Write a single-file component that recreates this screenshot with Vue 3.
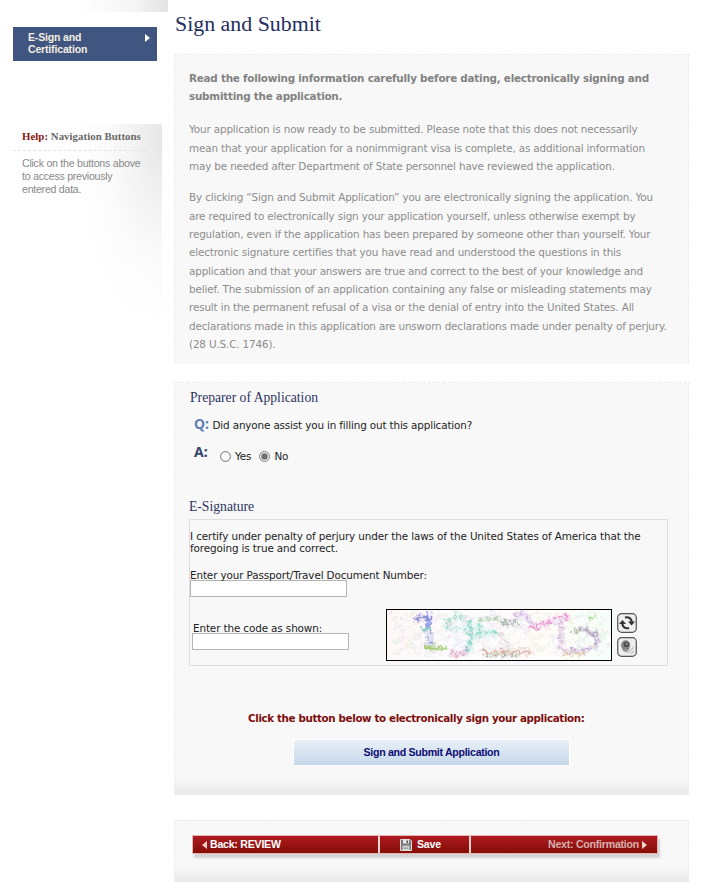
<template>
  <div class="page">
    <aside class="sidebar">
      <div class="side-cap"></div>
      <a class="side-link">
        <span>E-Sign and<br>Certification</span>
        <svg width="5" height="8" viewBox="0 0 5 8"><path d="M0 0L5 4L0 8Z" fill="#fff" /></svg>
      </a>
      <div class="help">
        <h4><b>Help:</b> Navigation Buttons</h4>
        <p>Click on the buttons above<br>to access previously<br>entered data.</p>
      </div>
    </aside>

    <main class="content">
      <h1>Sign and Submit</h1>

      <section class="panel intro">
        <p v-for="(para, i) in paragraphs" :key="i" :class="{ strong: i === 0 }">
          <span v-for="line in para" :key="line" class="line">{{ line }}</span>
        </p>
      </section>

      <section class="panel form">
        <h2>Preparer of Application</h2>
        <div class="question"><b class="q">Q:</b><span>Did anyone assist you in filling out this application?</span></div>
        <div class="answer">
          <b class="a">A:</b>
          <label v-for="opt in ['Yes', 'No']" :key="opt">
            <svg width="11" height="11" viewBox="0 0 11 11">
              <circle cx="5.5" cy="5.5" r="4.9" fill="#fff" stroke="#6e6e6e" />
              <circle v-if="assisted === opt" cx="5.5" cy="5.5" r="3.2" fill="#707070" />
            </svg>
            <input v-model="assisted" type="radio" :value="opt">
            <span>{{ opt }}</span>
          </label>
        </div>

        <h2 class="esign">E-Signature</h2>
        <div class="signature">
          <p>I certify under penalty of perjury under the laws of the United States of America that the<br>foregoing is true and correct.</p>
          <label class="field">Enter your Passport/Travel Document Number:<input type="text"></label>
          <div class="code-row">
            <label class="field code">Enter the code as shown:<input type="text"></label>
            <svg class="captcha" width="226" height="52" viewBox="0 0 226 52">
              <defs>
                <filter id="rough" x="-5%" y="-10%" width="110%" height="120%">
                  <feTurbulence type="fractalNoise" baseFrequency=".22" numOctaves="2" seed="4" />
                  <feDisplacementMap in="SourceGraphic" scale="11" xChannelSelector="R" yChannelSelector="G" />
                  <feGaussianBlur stdDeviation=".4" />
                </filter>
                <linearGradient id="wash">
                  <stop offset="0" stop-color="#fff8f6" /><stop offset=".3" stop-color="#fcfbff" />
                  <stop offset=".7" stop-color="#fffcf8" /><stop offset="1" stop-color="#f6fffa" />
                </linearGradient>
              </defs>
              <rect width="226" height="52" fill="url(#wash)" />
              <g filter="url(#rough)" fill="none">
                <path v-for="(s, i) in specks" :key="'s' + i" :d="s.d" :stroke="s.color" stroke-width="2.5" opacity=".22" />
                <path v-for="(m, i) in marks" :key="'h' + i" :d="m[0]" :stroke="m[1]" :stroke-width="m[2] + 5" opacity=".22" />
                <path v-for="(m, i) in marks" :key="'m' + i" :d="m[0]" :stroke="m[1]" :stroke-width="m[2] + 1" :stroke-dasharray="m[3]" opacity=".7" />
              </g>
              <rect x=".5" y=".5" width="225" height="51" fill="none" stroke="#000" />
            </svg>
            <div class="tools">
              <button type="button" aria-label="Refresh">
                <svg width="20" height="20" viewBox="0 0 20 20">
                  <rect x=".7" y=".7" width="18.6" height="18.6" rx="4" fill="#eee" stroke="#555" stroke-width="1.2" />
                  <path d="M8 4.5C12 3.5 14.5 5.5 14.7 9" fill="none" stroke="#333" stroke-width="2.2" />
                  <path d="M12 15C8 16 5.5 14 5.3 10.5" fill="none" stroke="#333" stroke-width="2.2" />
                  <path d="M11 8.5H18L14.6 12.5Z M2 11H9L5.4 7Z" fill="#333" />
                </svg>
              </button>
              <button type="button" aria-label="Listen">
                <svg width="20" height="20" viewBox="0 0 20 20">
                  <rect x=".7" y=".7" width="18.6" height="18.6" rx="4" fill="#eee" stroke="#555" stroke-width="1.2" />
                  <path d="M4 9L6 14L10 15.5L13 11Z" fill="#999" />
                  <circle cx="8.7" cy="7.9" r="4.6" fill="#858585" />
                  <circle cx="9.3" cy="7.4" r="2.6" fill="#484848" />
                  <circle cx="9.6" cy="7" r="1.1" fill="#aaa" />
                  <path d="M11 16L17 10M14 17L17 14" stroke="#c4c4c4" stroke-width="1.4" />
                </svg>
              </button>
            </div>
          </div>
        </div>

        <p class="prompt">Click the button below to electronically sign your application:</p>
        <button type="button" class="submit">Sign and Submit Application</button>
      </section>

      <section class="panel footer">
        <nav class="bar">
          <button type="button" class="back">
            <svg width="5" height="8" viewBox="0 0 5 8"><path d="M5 0L0 4L5 8Z" fill="#f3cfc4" /></svg>
            <span>Back: REVIEW</span>
          </button>
          <button type="button" class="save">
            <svg width="12" height="12" viewBox="0 0 12 12">
              <path d="M.5 .5H10L11.5 2V11.5H.5Z" fill="#777" stroke="#ddd" />
              <path d="M3 1H9V4.5H3Z" fill="#e8e8e8" /><path d="M6.5 1.5H8V4H6.5Z" fill="#555" />
              <path d="M2.5 6.5H9.5V11H2.5Z" fill="#ddd" /><path d="M3.5 8H8.5M3.5 9.5H8.5" stroke="#888" stroke-width=".7" />
            </svg>
            <span>Save</span>
          </button>
          <button type="button" class="next">
            <span>Next: Confirmation</span>
            <svg width="5" height="8" viewBox="0 0 5 8"><path d="M0 0L5 4L0 8Z" fill="#f3d8d0" /></svg>
          </button>
        </nav>
      </section>
    </main>
  </div>
</template>

<script setup>
import { ref } from 'vue'

const assisted = ref('No')

const paragraphs = [
  [
    'Read the following information carefully before dating, electronically signing and',
    'submitting the application.',
  ],
  [
    'Your application is now ready to be submitted. Please note that this does not necessarily',
    'mean that your application for a nonimmigrant visa is complete, as additional information',
    'may be needed after Department of State personnel have reviewed the application.',
  ],
  [
    'By clicking “Sign and Submit Application” you are electronically signing the application. You',
    'are required to electronically sign your application yourself, unless otherwise exempt by',
    'regulation, even if the application has been prepared by someone other than yourself. Your',
    'electronic signature certifies that you have read and understood the questions in this',
    'application and that your answers are true and correct to the best of your knowledge and',
    'belief. The submission of an application containing any false or misleading statements may',
    'result in the permanent refusal of a visa or the denial of entry into the United States. All',
    'declarations made in this application are unsworn declarations made under penalty of perjury.',
    '(28 U.S.C. 1746).',
  ],
]

// path, colour, width, dash pattern
const marks = [
  ['M27 11L38 8L46 11', '#7079c8', 2, '9 2'],
  ['M42 4L43 13L40 21', '#7b88f0', 2, '7 2'],
  ['M35 20L46 20', '#77c8b0', 2, '5 2'],
  ['M43 20L43 37', '#8f9ad5', 1, '4 3'],
  ['M40 39L62 39', '#8abd4f', 2, '8 1'],
  ['M60 18C61 9 72 5 80 11', '#90d2b7', 1, '3 3'],
  ['M82 11C86 19 86 35 81 43', '#78cec2', 3, '5 2'],
  ['M60 19L80 20', '#96d9d0', 1, '4 4'],
  ['M63 42C69 47 77 47 83 40', '#d69bb9', 1, '3 3'],
  ['M92 11L110 9L122 14', '#a9c4a1', 1, '5 3'],
  ['M93 14L93 25L112 23', '#74d4c2', 2, '5 3'],
  ['M113 26L122 36L117 42', '#d3b9d8', 1, '3 4'],
  ['M97 43L146 43', '#d2a18d', 1, '8 2'],
  ['M101 46L132 45', '#9fad91', 1, '3 5'],
  ['M116 14L134 15', '#a8abb6', 2, '5 3'],
  ['M129 7L139 5L146 15', '#c6a0df', 1, '4 2'],
  ['M144 18L158 15L171 8L184 8', '#e37fce', 2, '4 2'],
  ['M175 12L175 43', '#cda9dc', 2, '4 2'],
  ['M186 22L198 20L211 27', '#8cad83', 1, '5 2'],
  ['M193 19L210 26L213 35', '#be9ed2', 2, '5 2'],
  ['M174 42L206 40L212 32', '#b99fd0', 1, '7 2'],
  ['M179 45L199 44', '#dbb397', 1, '4 4'],
  ['M203 9L210 6', '#87dc76', 2, '4 2'],
]

// Pale speckle spread over the whole image
const tints = ['#e9a9c8', '#a9d8c9', '#c9b6ea', '#f0cfa8', '#b7dba7']
const specks = Array.from({ length: 180 }, (_, i) => {
  const x = 3 + (i * 37) % 216
  const y = 4 + (i * 23) % 43
  return { d: `M${x} ${y}l${3 + i % 6} ${i % 3 - 1}`, color: tints[i % 5] }
})
</script>

<style>
body { margin: 0; background: #fff; }
</style>

<style scoped>
* { box-sizing: border-box; }
h1, h2, h4, p { margin: 0; font-weight: normal; }
button { padding: 0; border: 0; background: none; font: inherit; letter-spacing: inherit; }
svg { display: block; flex: none; }

.page {
  display: flex;
  width: 711px;
  height: 890px;
  overflow: hidden;
  font: 10.4px/12px "DejaVu Sans", sans-serif;
  letter-spacing: -.12px;
  color: #222;
}

/* Sidebar */
.sidebar { width: 174px; font-family: "Liberation Sans", sans-serif; }
.side-cap { width: 168px; height: 12px; background: linear-gradient(90deg, #fff 45%, #f5f5f5 80%, #e2e2e2); }
.side-link {
  display: flex;
  justify-content: space-between;
  width: 144px;
  height: 34px;
  margin: 15px 0 0 13px;
  padding: 5px 7px 0 15px;
  background: #40557f;
  color: #f2efe2;
  font-size: 10.5px;
  font-weight: bold;
  line-height: 11.6px;
  letter-spacing: -.16px;
}
.side-link svg { margin-top: 2px; }
.help {
  width: 149px;
  height: 205px;
  margin: 63px 0 0 13px;
  padding: 6px 0 0 9px;
  background: radial-gradient(ellipse 85px 190px at 100% 8%, #e6e6e6, #f3f3f3 35%, #fbfbfb 65%, #fff);
}
.help h4 {
  width: 134px;
  height: 21px;
  margin-left: -9px;
  padding-left: 9px;
  border-bottom: 1px dashed #e4e4e4;
  color: #686868;
  font: bold 10.8px/12px "Liberation Serif", serif;
  letter-spacing: .05px;
  white-space: nowrap;
}
.help h4 b { color: #8a1511; }
.help p { padding-top: 6px; color: #888; font-size: 10.6px; line-height: 13px; letter-spacing: -.25px; white-space: nowrap; }

/* Panels */
.content { width: 515px; }
h1 { height: 54px; padding: 11px 0 0 1px; color: #252e60; font: 21.9px/26px "Liberation Serif", serif; letter-spacing: 0; }
.panel { background: #f8f8f8; border: 1px dashed #eeeee5; border-bottom: 0; }
.intro { height: 310px; padding: 14px 14px; color: #8c8c8c; line-height: 18.3px; letter-spacing: -.15px; }
.intro p { margin-bottom: 13.3px; }
.intro .line { display: block; white-space: nowrap; }
.intro .strong { margin-bottom: 14.7px; color: #828282; font-weight: bold; letter-spacing: -.235px; }

.form {
  height: 413px;
  margin-top: 18px;
  padding: 6px 20px 0 14px;
  border-top-color: #f8f8f8;
  background: linear-gradient(#f8f8f8 96%, #e9e9e8);
}
h2 { padding-left: 1px; color: #2c3560; font: 13.65px/17px "Liberation Serif", serif; letter-spacing: 0; }
.question { display: flex; margin: 10px 0 0 5px; line-height: 19px; letter-spacing: -.15px; }
.q, .a { font: bold 14px/15px "Noto Sans", sans-serif; letter-spacing: 0; }
.q { width: 18.5px; color: #5f7fb5; }
.a { width: 26px; color: #35456c; }
.answer { display: flex; margin: 9px 0 0 5px; }
.answer label { display: flex; align-items: center; height: 12px; margin: 6px 8px 0 0; }
.answer label span { margin-left: 4px; }
.answer input { display: none; }

.esign { margin: 36px 0 4px -1px; }
.signature { width: 479px; height: 147px; padding-top: 10px; border: 1px solid #dedede; }
.signature p { white-space: nowrap; }
.field { display: block; margin-top: 15px; }
.field input {
  display: block;
  width: 157px;
  height: 17px;
  margin: -1px 0 0;
  border: 1px solid #b5b5b5;
  background: #fff;
}
.code-row { display: flex; margin-top: 12px; }
.field.code { width: 193px; margin: 13px 0 0 3px; }
.field.code input { margin-left: -1px; }
.tools { display: flex; flex-direction: column; gap: 4px; margin: 4px 0 0 5px; }
.tools button { height: 20px; }

.prompt { margin-top: 46px; padding-left: 59px; color: #7d0c0c; font-size: 10.3px; font-weight: bold; letter-spacing: -.35px; white-space: nowrap; }
.submit {
  width: 277px;
  height: 27px;
  margin: 15px 0 0 104px;
  border: 1px solid #fff;
  background: linear-gradient(#e8f0f7, #c5d8e9);
  color: #0c0c73;
  font: bold 10.6px/25px "Liberation Sans", sans-serif;
  letter-spacing: -.29px;
}

/* Navigation bar */
.footer {
  height: 62px;
  margin-top: 25px;
  padding: 14px 0 0 17px;
  background: linear-gradient(#f8f8f8 75%, #e9e9e8);
}
.bar {
  display: flex;
  gap: 2px;
  width: 466px;
  height: 19px;
  border: 1px solid #e3b4b0;
  background: #ead2cf;
  box-shadow: 2px 4px 2px #d5d3d2;
  color: #fff;
  font: bold 10.6px/14px "Liberation Sans", sans-serif;
  letter-spacing: -.24px;
}
.bar button { display: flex; align-items: center; background: linear-gradient(#ae1b22, #850d06); color: #fff; }
.bar button span { padding-bottom: 2px; }
.bar .back { width: 185px; padding-left: 9px; gap: 3px; }
.bar .save { width: 89px; padding-left: 20px; gap: 5px; }
.bar .next { flex: 1; justify-content: flex-end; padding-right: 10px; gap: 3px; color: #d6b1ad; }
</style>
